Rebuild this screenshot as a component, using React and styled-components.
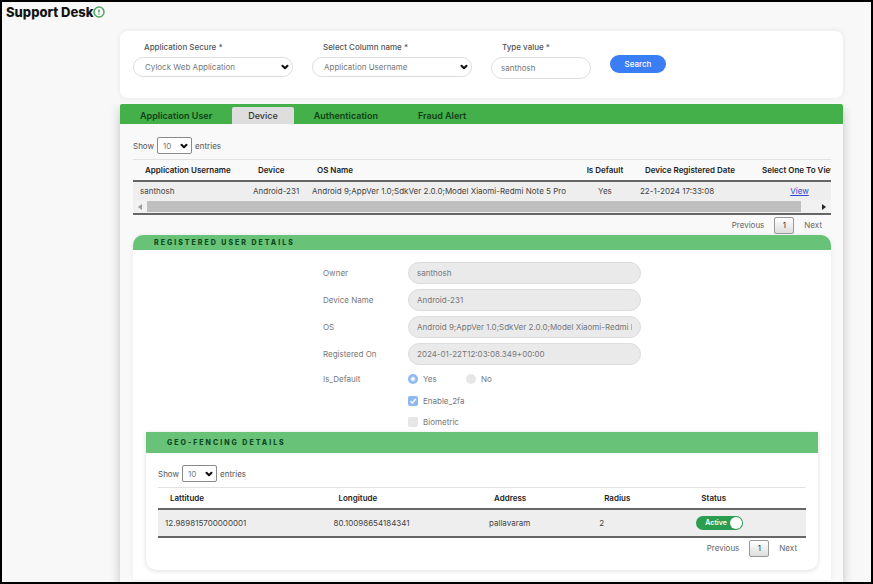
import { useState } from 'react';
import styled, { createGlobalStyle } from 'styled-components';
import { ChevronDown, CircleAlert } from 'lucide-react';

const tabs = ['Application User', 'Device', 'Authentication', 'Fraud Alert'];

const details = [
    { id: 'owner', label: 'Owner', value: 'santhosh' },
    { id: 'deviceName', label: 'Device Name', value: 'Android-231' },
    { id: 'os', label: 'OS', value: 'Android 9;AppVer 1.0;SdkVer 2.0.0;Model Xiaomi-Redmi Note 5 Pro' },
    { id: 'registeredOn', label: 'Registered On', value: '2024-01-22T12:03:08.349+00:00' },
];

function SelectBox({ id, options, small }) {
    return (
        <SelectWrap $small={small}>
            <select id={id}>
                {options.map((option) => <option key={option}>{option}</option>)}
            </select>
            <ChevronDown size={10} strokeWidth={5} />
        </SelectWrap>
    )
}

function Entries({ id }) {
    return (
        <EntriesRow>
            <label htmlFor={id}>Show</label>
            <SelectBox id={id} small options={['10', '25', '50']} />
            <span>entries</span>
        </EntriesRow>
    )
}

function Pages() {
    return (
        <Pagination>
            <PageLink>Previous</PageLink>
            <PageNumber>1</PageNumber>
            <PageLink>Next</PageLink>
        </Pagination>
    )
}

export default function App() {
    const [tab, setTab] = useState('Device');
    const [active, setActive] = useState(true);

    return (
        <Page>
            <GlobalStyle />
            <Title>Support Desk<CircleAlert size={12} strokeWidth={3} color="#4fa85a" /></Title>
            <Content>
                <Filters>
                    <Field $width="160px">
                        <label htmlFor="application">Application Secure *</label>
                        <SelectBox id="application" options={['Cylock Web Application']} />
                    </Field>
                    <Field $width="160px">
                        <label htmlFor="column">Select Column name *</label>
                        <SelectBox id="column" options={['Application Username']} />
                    </Field>
                    <Field $width="100px">
                        <label htmlFor="value">Type value *</label>
                        <TextInput id="value" defaultValue="santhosh" />
                    </Field>
                    <SearchButton type="button">Search</SearchButton>
                </Filters>

                <Panel>
                    <Tabs>
                        {tabs.map((name) => (
                            <Tab key={name} type="button" $active={tab === name} onClick={() => setTab(name)}>{name}</Tab>
                        ))}
                    </Tabs>
                    <PanelBody>
                        <Entries id="deviceEntries" />
                        <TableScroll>
                            <Table>
                                <colgroup>
                                    <Col $width="113px" />
                                    <Col $width="59px" />
                                    <Col />
                                    <Col $width="56px" />
                                    <Col $width="121px" />
                                    <Col $width="91px" />
                                </colgroup>
                                <thead>
                                    <tr>
                                        <th>Application Username</th>
                                        <th>Device</th>
                                        <th>OS Name</th>
                                        <Th>Is Default</Th>
                                        <th>Device Registered Date</th>
                                        <Th>Select One To View</Th>
                                    </tr>
                                </thead>
                                <tbody>
                                    <tr>
                                        <td>santhosh</td>
                                        <td>Android-231</td>
                                        <td>Android 9;AppVer 1.0;SdkVer 2.0.0;Model Xiaomi-Redmi Note 5 Pro</td>
                                        <Td>Yes</Td>
                                        <td>22-1-2024 17:33:08</td>
                                        <Td><a href="#details">View</a></Td>
                                    </tr>
                                </tbody>
                            </Table>
                            <ScrollBar aria-hidden="true">
                                <Arrow $left />
                                <Thumb />
                                <Arrow />
                            </ScrollBar>
                        </TableScroll>
                        <Pages />

                        <Card id="details">
                            <CardTitle>REGISTERED USER DETAILS</CardTitle>
                            <Form>
                                {details.map((item) => (
                                    <FormRow key={item.id}>
                                        <label htmlFor={item.id}>{item.label}</label>
                                        <Readout id={item.id} defaultValue={item.value} disabled />
                                    </FormRow>
                                ))}
                                <FormRow role="radiogroup" aria-labelledby="isDefault">
                                    <span id="isDefault">Is_Default</span>
                                    <Options>
                                        <Option><Tick type="radio" name="isDefault" defaultChecked disabled />Yes</Option>
                                        <Option><Tick type="radio" name="isDefault" disabled />No</Option>
                                    </Options>
                                </FormRow>
                                <CheckRow><Tick type="checkbox" defaultChecked disabled />Enable_2fa</CheckRow>
                                <CheckRow><Tick type="checkbox" disabled />Biometric</CheckRow>
                            </Form>

                            <GeoCard>
                                <GeoTitle>GEO-FENCING DETAILS</GeoTitle>
                                <GeoBody>
                                    <Entries id="geoEntries" />
                                    <Table $geo>
                                        <colgroup>
                                            <Col $width="26%" />
                                            <Col $width="24%" />
                                            <Col $width="17%" />
                                            <Col $width="15%" />
                                            <Col />
                                        </colgroup>
                                        <thead>
                                            <tr>
                                                <th>Lattitude</th>
                                                <th>Longitude</th>
                                                <th>Address</th>
                                                <th>Radius</th>
                                                <th>Status</th>
                                            </tr>
                                        </thead>
                                        <tbody>
                                            <tr>
                                                <td>12.989815700000001</td>
                                                <td>80.10098654184341</td>
                                                <td>pallavaram</td>
                                                <td>2</td>
                                                <td>
                                                    <Switch $on={active}>
                                                        Active
                                                        <input type="checkbox" checked={active} onChange={() => setActive(!active)} />
                                                    </Switch>
                                                </td>
                                            </tr>
                                        </tbody>
                                    </Table>
                                    <Pages />
                                </GeoBody>
                            </GeoCard>
                        </Card>
                    </PanelBody>
                </Panel>
            </Content>
        </Page>
    )
}

const GlobalStyle = createGlobalStyle`
* {
    box-sizing: border-box;
}
body {
    margin: 0;
    background: #f8f8f8;
    font-family: Inter, 'Liberation Sans', sans-serif;
    font-size: 8px;
    line-height: 12px;
    color: #555555;
}
button, input, select {
    font: inherit;
    color: inherit;
    margin: 0;
}
`
const Page = styled.div`
min-height: 100vh;
display: flex;
flex-direction: column;
border: 2px solid #000000;
background: #f8f8f8;
`
const Title = styled.h1`
display: flex;
align-items: center;
margin: 2px 0 0 4px;
font-size: 13px;
line-height: 16px;
font-weight: 800;
color: #151515;
`
const Content = styled.main`
flex: 1;
display: flex;
flex-direction: column;
gap: 6px;
margin: 11px 28px 0 118px;
`
const Filters = styled.form`
display: flex;
align-items: flex-start;
gap: 19px;
height: 67px;
padding: 10px 13px;
border-radius: 8px;
background: #ffffff;
box-shadow: 0 0 6px rgba(0, 0, 0, 0.08);
`
const Field = styled.div`
display: flex;
flex-direction: column;
gap: 4px;
width: ${(props) => props.$width};
label{
    padding-left: 11px;
    font-weight: 500;
}
`
const SelectWrap = styled.div`
position: relative;
width: ${(props) => (props.$small ? '35px' : '100%')};
select{
    appearance: none;
    display: block;
    width: 100%;
    height: ${(props) => (props.$small ? '17px' : '20px')};
    padding: ${(props) => (props.$small ? '0 5px' : '0 11px')};
    border: 1px solid ${(props) => (props.$small ? '#8a8a8a' : '#dedede')};
    border-radius: ${(props) => (props.$small ? '2px' : '10px')};
    background: #ffffff;
    color: #777777;
}
svg{
    position: absolute;
    top: 50%;
    right: 3px;
    transform: translateY(-50%);
    color: #111111;
    pointer-events: none;
}
`
const TextInput = styled.input`
width: 100%;
height: 22px;
padding: 0 9px;
border: 1px solid #dedede;
border-radius: 11px;
background: #ffffff;
color: #777777;
`
const SearchButton = styled.button`
width: 56px;
height: 18px;
margin-top: 14px;
padding: 0;
border: 0;
border-radius: 9px;
background: #3b7df5;
color: #ffffff;
font-weight: 500;
`
const Panel = styled.section`
flex: 1;
background: #f9f9f9;
box-shadow: 0 4px 10px rgba(0, 0, 0, 0.22);
clip-path: inset(0 -12px 0 -12px);
`
const Tabs = styled.nav`
display: flex;
align-items: flex-end;
height: 20px;
border-radius: 2px 2px 0 0;
background: #43b04a;
`
const Tab = styled.button`
height: 17px;
padding: 0 ${(props) => (props.$active ? '16px' : '20px')};
border: 0;
border-radius: 2px 2px 0 0;
background: ${(props) => (props.$active ? '#dedede' : 'transparent')};
color: ${(props) => (props.$active ? '#333333' : '#123f16')};
font-size: 9px;
font-weight: ${(props) => (props.$active ? 500 : 600)};
`
const PanelBody = styled.div`
padding: 13px 12px 0 13px;
`
const EntriesRow = styled.div`
display: flex;
align-items: center;
gap: 3px;
height: 17px;
`
const TableScroll = styled.div`
margin-top: 5px;
overflow: hidden;
border-bottom: 2px solid #666666;
`
const Table = styled.table`
width: ${(props) => (props.$geo ? '100%' : '102%')};
margin-top: ${(props) => (props.$geo ? '5px' : '0')};
border-collapse: separate;
border-spacing: 0;
border-top: 1px solid #e2e2e2;
border-bottom: ${(props) => (props.$geo ? '2px solid #666666' : '0')};
table-layout: fixed;
white-space: nowrap;
th{
    height: 22px;
    padding: 0 0 0 12px;
    border-bottom: 2px solid #666666;
    text-align: left;
    font-weight: 600;
    color: #222222;
}
td{
    height: ${(props) => (props.$geo ? '26px' : '18px')};
    padding: 0 0 0 7px;
    background: #eeeeee;
    color: #444444;
}
a{
    color: #2e48d4;
}
`
const Col = styled.col`
width: ${(props) => props.$width || 'auto'};
`
const Th = styled.th`
&&{
    padding: 0;
    text-align: center;
}
`
const Td = styled.td`
&&{
    padding: 0;
    text-align: center;
}
`
const ScrollBar = styled.div`
display: flex;
align-items: center;
gap: 5px;
height: 13px;
padding: 0 5px;
background: #f1f1f1;
`
const Arrow = styled.span`
border: 3px solid transparent;
border-width: 3px ${(props) => (props.$left ? '4px 3px 0' : '0 3px 4px')};
border-${(props) => (props.$left ? 'right' : 'left')}-color: ${(props) => (props.$left ? '#999999' : '#222222')};
`
const Thumb = styled.span`
flex: 1;
height: 11px;
margin-right: 16px;
background: #bfbfbf;
`
const Pagination = styled.div`
display: flex;
align-items: center;
justify-content: flex-end;
gap: 10px;
height: 20px;
padding-right: 9px;
`
const PageLink = styled.button`
padding: 0;
border: 0;
background: none;
color: #666666;
`
const PageNumber = styled.button`
width: 20px;
height: 17px;
padding: 0;
border: 1px solid #999999;
border-radius: 2px;
background: linear-gradient(#ffffff, #dddddd);
color: #333333;
`
const Card = styled.section`
padding-bottom: 10px;
border-radius: 10px 10px 0 0;
background: #ffffff;
box-shadow: 0 0 5px rgba(0, 0, 0, 0.06);
`
const CardTitle = styled.h2`
margin: 0;
padding: 0 21px;
border-radius: 10px 10px 0 0;
background: #68c379;
font-size: 7px;
line-height: 15px;
font-weight: 800;
letter-spacing: 2px;
color: #0d4a20;
`
const GeoTitle = styled(CardTitle)`
border-radius: 0;
line-height: 21px;
`
const Form = styled.form`
display: flex;
flex-direction: column;
gap: 5px;
width: 318px;
margin: 0 auto;
padding: 12px 0 2px;
`
const FormRow = styled.div`
display: grid;
grid-template-columns: 85px 1fr;
align-items: center;
color: #777777;
`
const Readout = styled.input`
width: 100%;
height: 22px;
padding: 0 8px;
border: 1px solid #dcdcdc;
border-radius: 11px;
background: #eaeaea;
color: #777777;
`
const Options = styled.div`
display: grid;
grid-template-columns: 58px 1fr;
`
const Option = styled.label`
display: flex;
align-items: center;
gap: 5px;
height: 18px;
`
const CheckRow = styled(Option)`
height: 16px;
padding-left: 85px;
color: #777777;
`
const Tick = styled.input`
appearance: none;
width: 10px;
height: 10px;
border-radius: ${(props) => (props.type === 'radio' ? '50%' : '2px')};
background: #e6e6e6;
&:checked{
    background: ${(props) => (props.type === 'radio'
        ? 'radial-gradient(circle, #ffffff 1px, #8fb9ee 3px)'
        : `#8fb9ee url("data:image/svg+xml,%3Csvg xmlns='http://www.w3.org/2000/svg' viewBox='0 0 10 10'%3E%3Cpath d='M2.5 5.2l1.8 1.8 3.4-4' fill='none' stroke='white' stroke-width='1.4'/%3E%3C/svg%3E")`)};
}
`
const GeoCard = styled.section`
margin: 0 13px;
border-radius: 0 0 10px 10px;
background: #ffffff;
box-shadow: 0 1px 5px rgba(0, 0, 0, 0.14);
`
const GeoBody = styled.div`
padding: 12px 12px;
`
const Switch = styled.label`
display: flex;
align-items: center;
justify-content: space-between;
width: 47px;
height: 14px;
padding: 0 1px 0 9px;
border-radius: 7px;
background: ${(props) => (props.$on ? '#2a9d50' : '#999999')};
color: #ffffff;
font-size: 7px;
font-weight: 600;
input{
    appearance: none;
    width: 12px;
    height: 12px;
    border-radius: 50%;
    background: #ffffff;
}
`
